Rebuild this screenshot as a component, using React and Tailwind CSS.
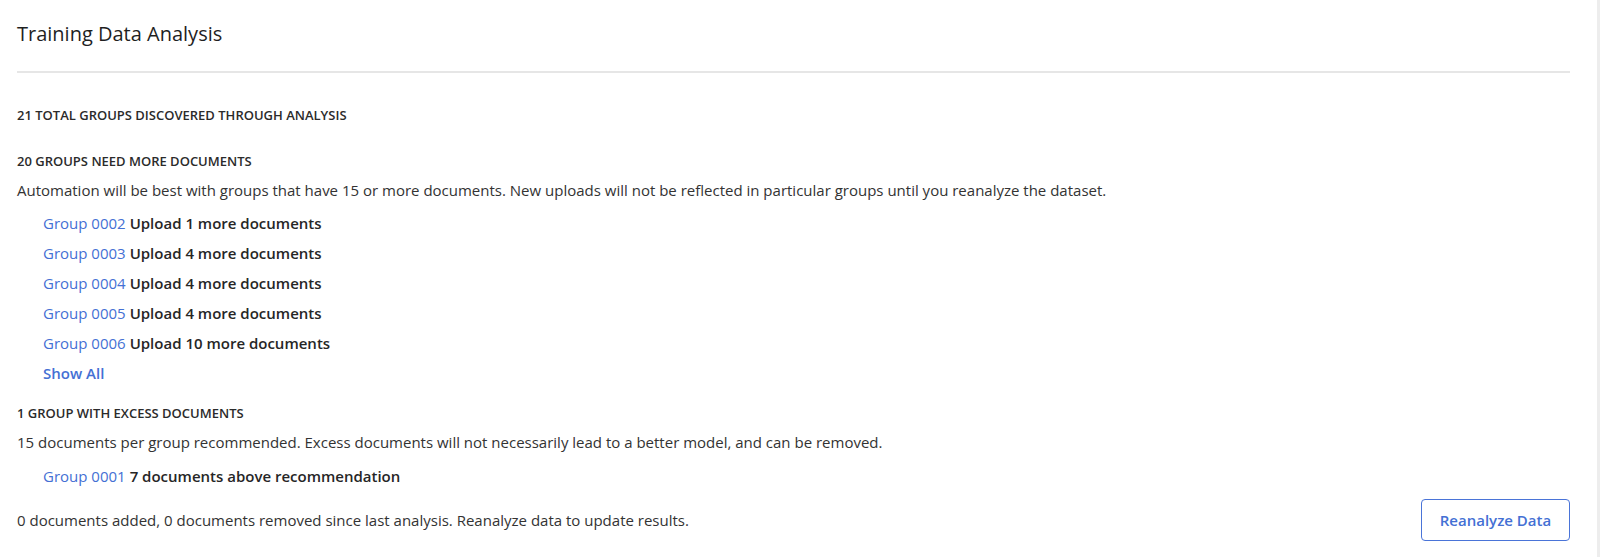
import React from 'react';

const needMore = [
  { name: 'Group 0002', text: 'Upload 1 more documents' },
  { name: 'Group 0003', text: 'Upload 4 more documents' },
  { name: 'Group 0004', text: 'Upload 4 more documents' },
  { name: 'Group 0005', text: 'Upload 4 more documents' },
  { name: 'Group 0006', text: 'Upload 10 more documents' },
];

const GroupRow = ({ name, text }) => (
  <div className="h-[30px] flex items-center pl-[26px] text-[15px]">
    <a href="#" className="text-[#4470d4]">{name}</a>
    <span className="ml-[4px] font-semibold text-[#262626]">{text}</span>
  </div>
);

const App = () => {
  return (
    <div
      className="w-[1600px] h-[557px] bg-white flex text-[#333333] overflow-hidden"
      style={{ fontFamily: '"Open Sans", "Liberation Sans", sans-serif' }}
    >
      <div className="flex-1 pl-[17px] pr-[27px]">
        <h1 className="pt-[21px] text-[20px] leading-[26px] text-[#1f1f1f]">Training Data Analysis</h1>
        <div className="mt-[24px] h-[2px] bg-[#e6e6e6]" />

        <h2 className="mt-[34px] text-[13px] leading-[16px] font-semibold uppercase text-[#2b2b2b]">
          21 total groups discovered through analysis
        </h2>

        <h2 className="mt-[30px] text-[13px] leading-[16px] font-semibold uppercase text-[#2b2b2b]">
          20 groups need more documents
        </h2>
        <p className="mt-[10px] text-[15px] leading-[22px]">
          Automation will be best with groups that have 15 or more documents. New uploads will not be reflected in particular groups until you reanalyze the dataset.
        </p>
        <div className="mt-[7px]">
          {needMore.map((g) => (
            <GroupRow key={g.name} {...g} />
          ))}
          <div className="h-[30px] flex items-center pl-[26px] text-[15px]">
            <a href="#" className="text-[#4470d4] font-semibold">Show All</a>
          </div>
        </div>

        <h2 className="mt-[17px] text-[13px] leading-[16px] font-semibold uppercase text-[#2b2b2b]">
          1 group with excess documents
        </h2>
        <p className="mt-[10px] text-[15px] leading-[22px]">
          15 documents per group recommended. Excess documents will not necessarily lead to a better model, and can be removed.
        </p>
        <div className="mt-[8px]">
          <GroupRow name="Group 0001" text="7 documents above recommendation" />
        </div>

        <div className="mt-[8px] flex items-center justify-between">
          <p className="text-[15px] leading-[22px]">
            0 documents added, 0 documents removed since last analysis. Reanalyze data to update results.
          </p>
          <button className="w-[149px] h-[42px] border-[1.5px] border-[#4a74d8] rounded-[4px] text-[#4470d4] text-[15px] font-semibold bg-white">
            Reanalyze Data
          </button>
        </div>
      </div>
      <div className="w-[3px] bg-[#ededed]" />
    </div>
  );
};

export default App;
